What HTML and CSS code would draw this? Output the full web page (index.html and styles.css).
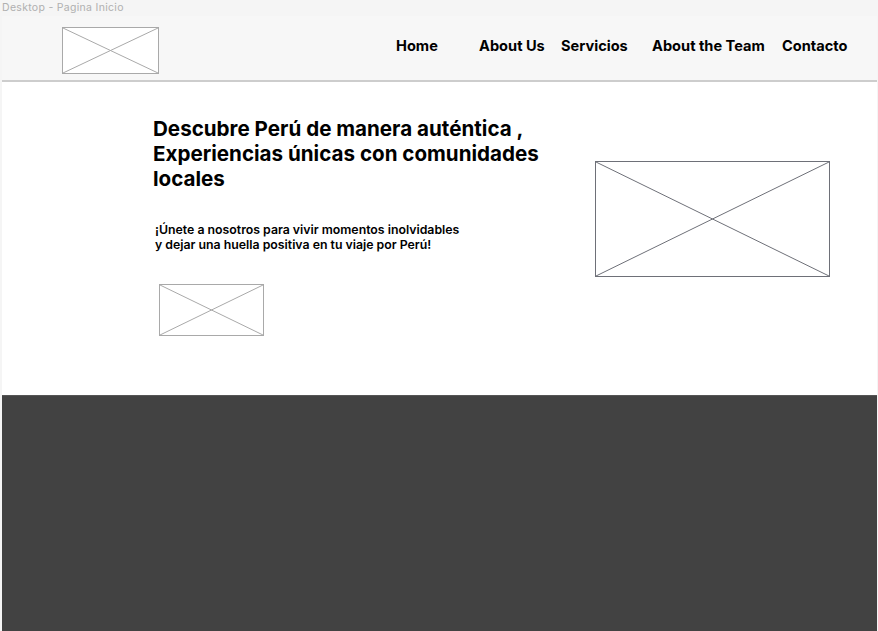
FILE: index.html
```html
<!DOCTYPE html>
<html lang="es">
<head>
<meta charset="utf-8">
<title>Desktop - Pagina Inicio</title>
<link rel="stylesheet" href="styles.css">
</head>
<body>
<div class="canvas-label">Desktop - Pagina Inicio</div>
<div class="frame">
  <header class="header">
    <div class="ph ph-logo">
      <svg viewBox="0 0 100 100" preserveAspectRatio="none"><line x1="0" y1="0" x2="100" y2="100"/><line x1="100" y1="0" x2="0" y2="100"/></svg>
    </div>
    <nav class="nav">
      <a class="nav-home">Home</a>
      <a class="nav-about">About Us</a>
      <a class="nav-serv">Servicios</a>
      <a class="nav-team">About the Team</a>
      <a class="nav-contact">Contacto</a>
    </nav>
  </header>
  <section class="hero">
    <div class="hero-text">
      <h1>Descubre Perú de manera auténtica ,<br>Experiencias únicas con comunidades<br>locales</h1>
      <p>¡Únete a nosotros para vivir momentos inolvidables<br>y dejar una huella positiva en tu viaje por Perú!</p>
      <div class="ph ph-small">
        <svg viewBox="0 0 100 100" preserveAspectRatio="none"><line x1="0" y1="0" x2="100" y2="100"/><line x1="100" y1="0" x2="0" y2="100"/></svg>
      </div>
    </div>
    <div class="ph ph-hero">
      <svg viewBox="0 0 100 100" preserveAspectRatio="none"><line x1="0" y1="0" x2="100" y2="100"/><line x1="100" y1="0" x2="0" y2="100"/></svg>
    </div>
  </section>
  <section class="dark"></section>
</div>
</body>
</html>
```
FILE: styles.css
```css
html, body {
  margin: 0;
  padding: 0;
  background: #f5f5f5;
  overflow: hidden;
}
body {
  font-family: Inter, "Liberation Sans", sans-serif;
  color: #000;
}
.canvas-label {
  height: 16px;
  padding-left: 2px;
  font-size: 10.5px;
  line-height: 16px;
  letter-spacing: 0.3px;
  color: #b0b0b0;
}
.frame {
  margin-left: 2px;
  width: 875px;
  background: #fff;
}
.header {
  height: 64px;
  background: #f7f7f7;
  border-bottom: 2px solid #cdcdcd;
  display: flex;
  align-items: center;
  padding-left: 60px;
}
.ph {
  box-sizing: border-box;
  background: #fff;
  border: 1px solid #a9a9a9;
}
.ph svg {
  display: block;
  width: 100%;
  height: 100%;
}
.ph line {
  stroke: #a9a9a9;
  stroke-width: 1;
  vector-effect: non-scaling-stroke;
}
.ph-logo {
  width: 97px;
  height: 47px;
  margin-top: 5px;
}
.nav {
  display: grid;
  grid-template-columns: 83px 82px 91px 130px auto;
  margin-left: 237px;
  margin-top: -5px;
}
.nav a {
  font-size: 14.6px;
  font-weight: 700;
  line-height: 20px;
  color: #000;
  text-decoration: none;
}
.hero {
  height: 313px;
  display: flex;
  box-sizing: border-box;
  padding-top: 34px;
  padding-left: 151px;
}
.hero-text {
  width: 442px;
}
.hero h1 {
  margin: 0;
  font-size: 20.6px;
  line-height: 25px;
  font-weight: 700;
}
.hero p {
  margin: 31px 0 0 2px;
  font-size: 12.3px;
  line-height: 15px;
  font-weight: 600;
}
.ph-small {
  margin: 32px 0 0 6px;
  width: 105px;
  height: 52px;
}
.ph-hero {
  margin-top: 45px;
  width: 235px;
  height: 116px;
  border-color: #6e7078;
}
.ph-hero line {
  stroke: #6e7078;
}
.dark {
  height: 240px;
  background: #424242;
  border-top: 1px solid #555;
}
```
